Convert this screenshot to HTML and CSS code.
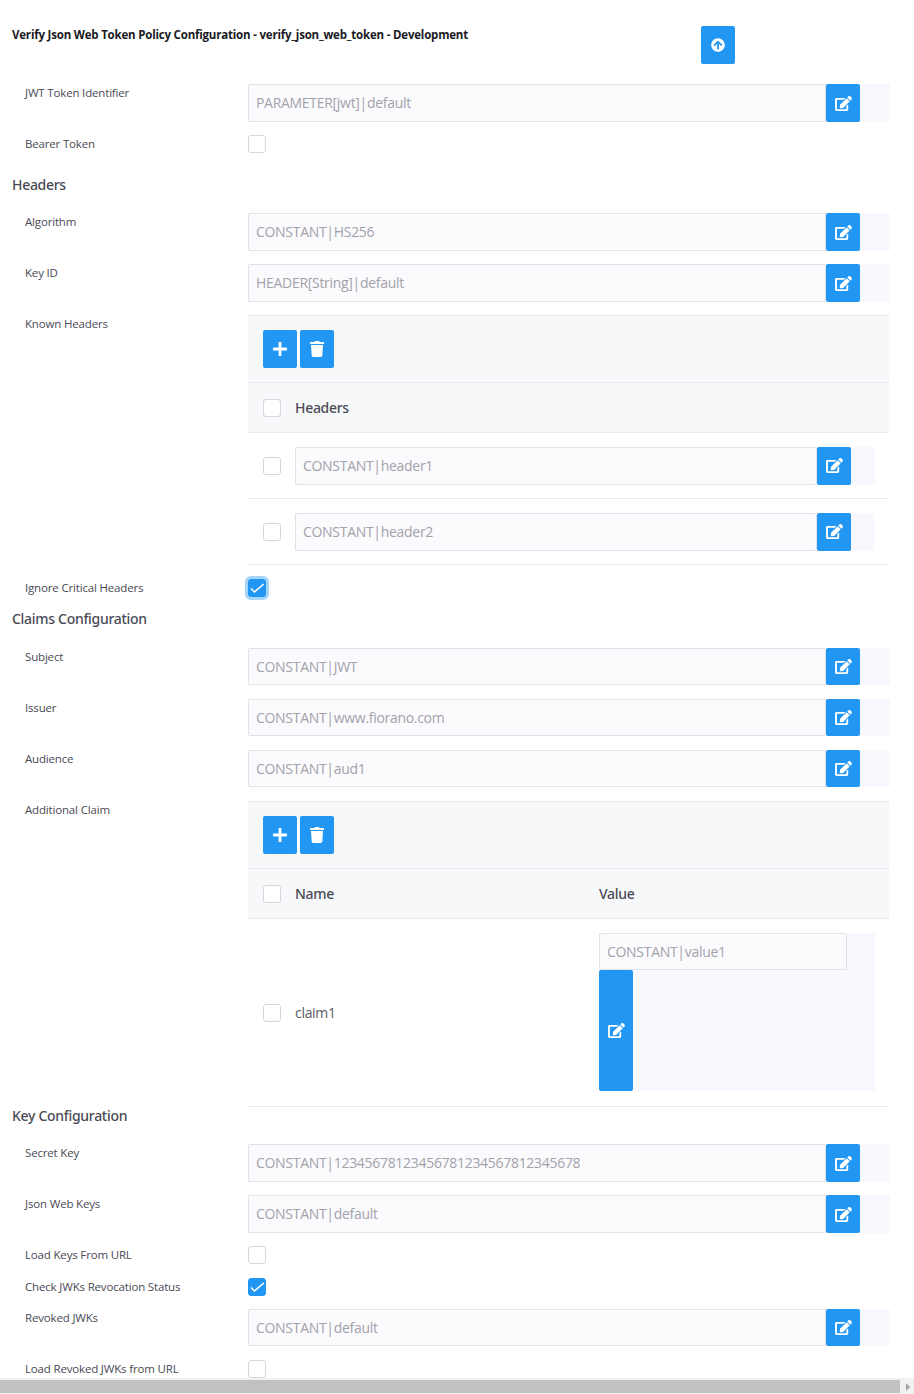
FILE: index.html
```html
<!DOCTYPE html>
<html lang="en">
<head>
<meta charset="utf-8">
<title>Verify Json Web Token Policy Configuration</title>
<link rel="stylesheet" href="styles.css">
</head>
<body>
<svg class="sprite" width="0" height="0" aria-hidden="true">
  <symbol id="i-edit" viewBox="0 0 576 512"><path d="M402.6 83.2l90.2 90.2c3.8 3.8 3.8 10 0 13.8L274.4 405.6l-92.8 10.3c-12.4 1.4-22.9-9.1-21.5-21.5l10.3-92.8L388.8 83.2c3.8-3.8 10-3.8 13.8 0zm162-22.9l-48.8-48.8c-15.2-15.2-39.9-15.2-55.2 0l-35.4 35.4c-3.8 3.8-3.8 10 0 13.8l90.2 90.2c3.8 3.8 10 3.8 13.8 0l35.4-35.4c15.2-15.3 15.2-40 0-55.2zM384 346.2V448H64V128h229.8c3.2 0 6.2-1.3 8.5-3.5l40-40c7.6-7.6 2.2-20.5-8.5-20.5H48C21.5 64 0 85.5 0 112v352c0 26.5 21.5 48 48 48h352c26.5 0 48-21.5 48-48V306.2c0-10.7-12.9-16-20.5-8.5l-40 40c-2.2 2.3-3.5 5.3-3.5 8.5z"/></symbol>
  <symbol id="i-up" viewBox="0 0 512 512"><path d="M8 256C8 119 119 8 256 8s248 111 248 248-111 248-248 248S8 393 8 256zm143.6 28.9l72.4-75.5V392c0 13.3 10.7 24 24 24h16c13.3 0 24-10.7 24-24V209.4l72.4 75.5c9.3 9.7 24.8 9.9 34.3.4l10.9-11c9.4-9.4 9.4-24.6 0-33.9L273 107.7c-9.4-9.4-24.6-9.4-33.9 0L106.3 240.4c-9.4 9.4-9.4 24.6 0 33.9l10.9 11c9.6 9.5 25.1 9.3 34.4-.4z"/></symbol>
  <symbol id="i-plus" viewBox="0 0 14 14"><path d="M5.6 0h2.8v5.6H14v2.8H8.4V14H5.6V8.4H0V5.6h5.6z"/></symbol>
  <symbol id="i-trash" viewBox="0 0 448 512"><path d="M432 32H312l-9.4-18.7A24 24 0 0 0 281.1 0H166.8a23.72 23.72 0 0 0-21.4 13.3L136 32H16A16 16 0 0 0 0 48v32a16 16 0 0 0 16 16h416a16 16 0 0 0 16-16V48a16 16 0 0 0-16-16zM53.2 467a48 48 0 0 0 47.9 45h245.8a48 48 0 0 0 47.9-45L416 128H32z"/></symbol>
  <symbol id="i-check" viewBox="0 0 18 18"><path d="M3 9.5l3.5 3.5L15.8 5" fill="none" stroke="#fff" stroke-width="1.6"/></symbol>
</svg>

<main class="page">
  <header class="title-bar">
    <h1 class="title">Verify Json Web Token Policy Configuration - verify_json_web_token - Development</h1>
    <button class="btn btn-upload" type="button"><svg class="ico-up"><use href="#i-up"/></svg></button>
  </header>

  <div class="row row-field">
    <span class="label">JWT Token Identifier</span>
    <div class="group"><div class="field">PARAMETER[jwt]|default</div><button class="btn" type="button"><svg class="ico"><use href="#i-edit"/></svg></button></div>
  </div>
  <div class="row row-check">
    <span class="label">Bearer Token</span>
    <span class="cb"></span>
  </div>

  <h2 class="section sec-headers">Headers</h2>
  <div class="row row-field">
    <span class="label">Algorithm</span>
    <div class="group"><div class="field">CONSTANT|HS256</div><button class="btn" type="button"><svg class="ico"><use href="#i-edit"/></svg></button></div>
  </div>
  <div class="row row-field">
    <span class="label">Key ID</span>
    <div class="group"><div class="field">HEADER[String]|default</div><button class="btn" type="button"><svg class="ico"><use href="#i-edit"/></svg></button></div>
  </div>
  <div class="row row-table">
    <span class="label">Known Headers</span>
    <div class="table">
      <div class="toolbar">
        <button class="btn" type="button"><svg class="ico-plus"><use href="#i-plus"/></svg></button>
        <button class="btn" type="button"><svg class="ico-trash"><use href="#i-trash"/></svg></button>
      </div>
      <div class="thead"><span class="cb"></span><span class="th">Headers</span></div>
      <div class="tr">
        <span class="cb"></span>
        <div class="group group-cell"><div class="field">CONSTANT|header1</div><button class="btn" type="button"><svg class="ico"><use href="#i-edit"/></svg></button></div>
      </div>
      <div class="tr">
        <span class="cb"></span>
        <div class="group group-cell"><div class="field">CONSTANT|header2</div><button class="btn" type="button"><svg class="ico"><use href="#i-edit"/></svg></button></div>
      </div>
    </div>
  </div>
  <div class="row row-check row-ignore">
    <span class="label">Ignore Critical Headers</span>
    <span class="cb on focus"><svg class="tick"><use href="#i-check"/></svg></span>
  </div>

  <h2 class="section sec-claims">Claims Configuration</h2>
  <div class="row row-field short">
    <span class="label">Subject</span>
    <div class="group"><div class="field">CONSTANT|JWT</div><button class="btn" type="button"><svg class="ico"><use href="#i-edit"/></svg></button></div>
  </div>
  <div class="row row-field short">
    <span class="label">Issuer</span>
    <div class="group"><div class="field">CONSTANT|www.fiorano.com</div><button class="btn" type="button"><svg class="ico"><use href="#i-edit"/></svg></button></div>
  </div>
  <div class="row row-field short">
    <span class="label">Audience</span>
    <div class="group"><div class="field">CONSTANT|aud1</div><button class="btn" type="button"><svg class="ico"><use href="#i-edit"/></svg></button></div>
  </div>
  <div class="row row-claims">
    <span class="label">Additional Claim</span>
    <div class="table">
      <div class="toolbar">
        <button class="btn" type="button"><svg class="ico-plus"><use href="#i-plus"/></svg></button>
        <button class="btn" type="button"><svg class="ico-trash"><use href="#i-trash"/></svg></button>
      </div>
      <div class="thead"><span class="cb"></span><span class="th th-name">Name</span><span class="th">Value</span></div>
      <div class="tr tr-claim">
        <span class="cb"></span>
        <span class="cell-name">claim1</span>
        <div class="wrapped">
          <div class="field">CONSTANT|value1</div>
          <button class="btn btn-tall" type="button"><svg class="ico"><use href="#i-edit"/></svg></button>
        </div>
      </div>
    </div>
  </div>

  <h2 class="section sec-key">Key Configuration</h2>
  <div class="row row-field">
    <span class="label">Secret Key</span>
    <div class="group"><div class="field">CONSTANT|12345678123456781234567812345678</div><button class="btn" type="button"><svg class="ico"><use href="#i-edit"/></svg></button></div>
  </div>
  <div class="row row-field">
    <span class="label">Json Web Keys</span>
    <div class="group"><div class="field">CONSTANT|default</div><button class="btn" type="button"><svg class="ico"><use href="#i-edit"/></svg></button></div>
  </div>
  <div class="row row-check row-load-keys">
    <span class="label">Load Keys From URL</span>
    <span class="cb"></span>
  </div>
  <div class="row row-check">
    <span class="label">Check JWKs Revocation Status</span>
    <span class="cb on"><svg class="tick"><use href="#i-check"/></svg></span>
  </div>
  <div class="row row-field short">
    <span class="label">Revoked JWKs</span>
    <div class="group"><div class="field">CONSTANT|default</div><button class="btn" type="button"><svg class="ico"><use href="#i-edit"/></svg></button></div>
  </div>
  <div class="row row-check">
    <span class="label">Load Revoked JWKs from URL</span>
    <span class="cb"></span>
  </div>
</main>

<div class="hscroll"><span class="hscroll-thumb"></span><span class="hscroll-arrow"></span></div>
</body>
</html>
```

FILE: styles.css
```css
* { box-sizing: border-box; }
html, body { margin: 0; padding: 0; height: 100%; overflow: hidden; background: #fff; }
body { font-family: "Open Sans", "Noto Sans", sans-serif; color: #4a4a55; }
.sprite { display: block; height: 0; }

.page { width: 914px; }

.title-bar { display: flex; height: 84px; padding: 26px 0 0 12px; }
.title { width: 689px; margin: 0; font-size: 11.5px; font-weight: 700; line-height: 18px; color: #1a1a24; letter-spacing: -0.2px; }

.btn {
  display: flex; align-items: center; justify-content: center;
  width: 34px; height: 38px; padding: 0; border: 0;
  border-radius: 2px; background: #2196f3; flex: none;
}
.btn svg { fill: #fff; display: block; }
.ico { width: 17px; height: 15px; }
.ico-up { width: 14px; height: 14px; }
.ico-plus { width: 14px; height: 14px; }
.ico-trash { width: 14px; height: 16px; }

.row { display: grid; grid-template-columns: 248px 642px; margin-bottom: 13px; align-items: start; }
.label { height: 18px; padding: 0 0 0 25px; font-size: 11.5px; letter-spacing: -0.17px; line-height: 18px; color: #4a4a55; }
.row-check { align-items: center; }

.group { display: flex; height: 38px; background: #f8f9ff; }
.short .group { height: 37px; }
.short .btn { height: 37px; }
.short { margin-bottom: 14px; }

.field {
  flex: 1; height: 100%; padding: 0 7px;
  display: flex; align-items: center;
  font-size: 14px; letter-spacing: -0.3px; line-height: 20px; color: #a2a2aa;
  background: #fbfbfe; border: 1px solid #e2e2e8; border-radius: 2px;
}
.group .btn { margin-right: 30px; }

.cb {
  display: block; position: relative; flex: none;
  width: 18px; height: 18px;
  border: 1px solid #d6d6dc; border-radius: 3px; background: #fff;
}
.cb.on { border-color: #2196f3; background: #2196f3; }
.cb.focus { box-shadow: 0 0 0 3px #a6d5fa; }
.tick { position: absolute; left: -1px; top: -1px; width: 18px; height: 18px; display: block; }

.section { margin: 0; padding-left: 12px; font-family: "Noto Sans", "Open Sans", sans-serif; font-size: 14px; font-weight: 500; letter-spacing: -0.3px; line-height: 20px; color: #4a4a55; }
.sec-headers { padding-top: 9px; height: 47px; }
.sec-claims { height: 39px; }
.sec-key { height: 38px; margin-top: -1px; }

.table { width: 641px; border-top: 1px solid #e9e9ee; }
.toolbar { display: flex; gap: 3px; height: 67px; padding: 14px 0 0 15px; background: #f7f8fa; border-bottom: 1px solid #e9e9ee; }
.thead {
  display: flex; align-items: center; height: 50px; padding-left: 15px;
  background: #f7f8fa; border-bottom: 1px solid #e9e9ee;
}
.th { margin-left: 14px; font-family: "Noto Sans", "Open Sans", sans-serif; font-size: 14px; font-weight: 500; letter-spacing: -0.3px; color: #4a4a55; }
.th-name { width: 290px; }
.tr { display: flex; align-items: center; height: 66px; padding-left: 15px; border-bottom: 1px solid #e9e9ee; }
.group-cell { margin-left: 14px; width: 580px; }
.group-cell .btn { margin-right: 24px; }

.row-table { margin-bottom: 14px; }
.row-ignore { margin-bottom: 12px; }
.row-claims { margin-bottom: 0; }
.row-load-keys { margin-bottom: 14px; }

.tr-claim { height: 188px; }
.cell-name { width: 290px; margin-left: 14px; font-size: 14px; letter-spacing: -0.3px; color: #5a5a64; }
.wrapped { margin: 0 0 1px 14px; width: 276px; height: 158px; background: #f8f9ff; }
.wrapped .field { width: 248px; height: 37px; flex: none; }
.btn-tall { height: 121px; }

.hscroll {
  position: fixed; left: 0; right: 0; bottom: 0; height: 16px; padding-top: 1px;
  background: #f1f1f1; display: flex; align-items: center;
}
.hscroll-thumb { display: block; width: 900px; height: 13px; background: #c1c1c1; }
.hscroll-arrow {
  display: block; margin-left: 6px; width: 0; height: 0;
  border-left: 4px solid #a3a3a3; border-top: 4px solid transparent; border-bottom: 4px solid transparent;
}
```
